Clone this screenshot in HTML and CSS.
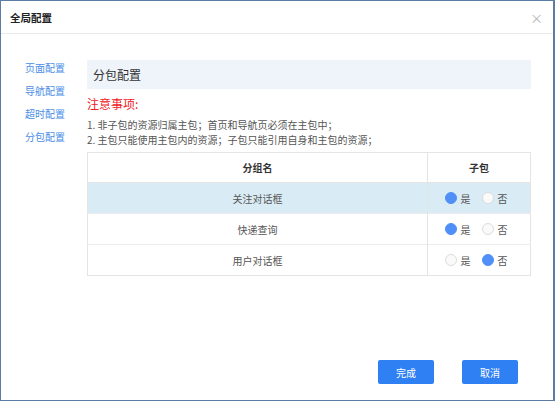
FILE: index.html
```html
<!DOCTYPE html>
<html lang="zh-CN">
<head>
<meta charset="utf-8">
<title>全局配置</title>
<link rel="stylesheet" href="styles.css">
</head>
<body>
<div class="dialog">
  <div class="dlg-header">
    <span class="dlg-title">全局配置</span>
    <span class="dlg-close">×</span>
  </div>
  <div class="dlg-body">
    <ul class="nav">
      <li>页面配置</li>
      <li>导航配置</li>
      <li>超时配置</li>
      <li>分包配置</li>
    </ul>
    <div class="content">
      <div class="section-title">分包配置</div>
      <div class="notice-title">注意事项:</div>
      <div class="notes">
        <p>1. 非子包的资源归属主包；首页和导航页必须在主包中；</p>
        <p>2. 主包只能使用主包内的资源；子包只能引用自身和主包的资源；</p>
      </div>
      <table class="grid">
        <thead>
          <tr><th class="c-name">分组名</th><th class="c-sub">子包</th></tr>
        </thead>
        <tbody>
          <tr class="active">
            <td>关注对话框</td>
            <td><div class="radios"><span class="radio on"></span><span class="lbl">是</span><span class="radio"></span><span class="lbl">否</span></div></td>
          </tr>
          <tr>
            <td>快递查询</td>
            <td><div class="radios"><span class="radio on"></span><span class="lbl">是</span><span class="radio"></span><span class="lbl">否</span></div></td>
          </tr>
          <tr>
            <td>用户对话框</td>
            <td><div class="radios"><span class="radio"></span><span class="lbl">是</span><span class="radio on"></span><span class="lbl">否</span></div></td>
          </tr>
        </tbody>
      </table>
    </div>
  </div>
  <div class="dlg-footer">
    <button class="btn">完成</button>
    <button class="btn">取消</button>
  </div>
</div>
</body>
</html>
```

FILE: styles.css
```css
html, body {
  margin: 0;
  padding: 0;
  background: #ffffff;
}
body {
  font-family: "Noto Sans CJK SC", "Noto Sans", sans-serif;
  color: #333;
}
.dialog {
  width: 555px;
  height: 401px;
  box-sizing: border-box;
  border: 1px solid #5b7ca3;
  border-right-width: 2px;
  display: flex;
  flex-direction: column;
  background: #fff;
}
.dlg-header {
  height: 32px;
  border-bottom: 1px solid #e9e9e9;
  display: flex;
  align-items: center;
  justify-content: space-between;
  padding: 0 10px 0 9px;
  flex: none;
}
.dlg-title {
  font-size: 10.5px;
  font-weight: 600;
  color: #222;
}
.dlg-close {
  font-size: 13px;
  color: #b5b5b5;
  line-height: 1;
}
.dlg-body {
  display: flex;
  flex: none;
}
.nav {
  list-style: none;
  margin: 0;
  padding: 22px 0 0 24px;
  width: 62px;
  flex: none;
}
.nav li {
  font-size: 10px;
  line-height: 23px;
  height: 23px;
  color: #4b8ee8;
}
.content {
  width: 444px;
  padding-top: 26px;
}
.section-title {
  height: 29px;
  line-height: 29px;
  background: #eff4fb;
  padding-left: 6px;
  font-size: 12px;
  color: #333;
}
.notice-title {
  margin-top: 8px;
  font-size: 12px;
  line-height: 14px;
  color: #f0201c;
}
.notes {
  margin-top: 6px;
  font-size: 10px;
  line-height: 15px;
  color: #555;
}
.notes p {
  margin: 0;
}
.grid {
  margin-top: 5px;
  width: 444px;
  border-collapse: collapse;
  border: 1px solid #e4e4e4;
  font-size: 10px;
  table-layout: fixed;
}
.grid th {
  height: 29px;
  font-weight: 600;
  color: #333;
  text-align: center;
  padding: 0;
  border-bottom: 1px solid #e4e4e4;
}
.grid td {
  height: 30px;
  text-align: center;
  padding: 0;
  color: #555;
  border-top: 1px solid #ececec;
}
.grid .c-name {
  width: 339px;
  border-right: 1px solid #e4e4e4;
}
.grid td:first-child {
  border-right: 1px solid #e4e4e4;
}
.grid tr.active td {
  background: #d9ebf5;
}
.radios {
  display: flex;
  align-items: center;
  justify-content: center;
  padding-right: 6px;
}
.radio {
  width: 10px;
  height: 10px;
  border-radius: 50%;
  border: 1px solid #dcdcdc;
  background: #fafafa;
  flex: none;
}
.radio.on {
  background: #4f8ff7;
  border-color: #4f8ff7;
}
.lbl {
  margin: 0 11px 0 4px;
  color: #555;
}
.lbl:last-child {
  margin-right: 0;
}
.dlg-footer {
  margin-top: auto;
  display: flex;
  justify-content: flex-end;
  gap: 28px;
  padding: 0 35px 16px 0;
}
.btn {
  width: 56px;
  height: 24px;
  border: none;
  border-radius: 2px;
  background: #2f80f2;
  color: #fff;
  font-family: "Noto Sans CJK SC", "Noto Sans", sans-serif;
  font-size: 10px;
  padding: 0;
}
```
